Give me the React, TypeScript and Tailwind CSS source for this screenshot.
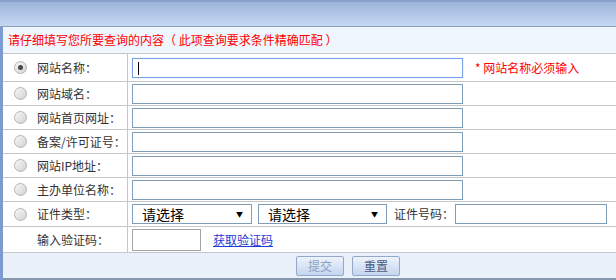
const font = { fontFamily: '"Noto Sans CJK SC", "Liberation Sans", sans-serif' };

function Radio({ checked }: { checked?: boolean }) {
  return (
    <span className="flex h-[13px] w-[13px] items-center justify-center rounded-full border border-[#b4b4b4] bg-gradient-to-br from-[#f8f8f8] to-[#d2d2d2]">
      {checked && <span className="h-[5px] w-[5px] rounded-full bg-[#4a4a4a]" />}
    </span>
  );
}

function Row({
  label,
  radio,
  checked,
  h,
  children,
}: {
  label: string;
  radio?: boolean;
  checked?: boolean;
  h: string;
  children: React.ReactNode;
}) {
  return (
    <div className={`flex ${h} border-b border-[#c6c6c6] bg-white`}>
      <div className="flex w-[125px] shrink-0 items-center border-r border-[#c6c6c6]">
        <div className="flex w-[34px] justify-center">{radio && <Radio checked={checked} />}</div>
        <span className="text-[12px] text-[#333]">{label}</span>
      </div>
      <div className="flex items-center pl-[4px]">{children}</div>
    </div>
  );
}

function Field({ w, focus }: { w: string; focus?: boolean }) {
  return (
    <div
      className={`relative h-[20px] ${w} border ${
        focus ? "border-[#7aa2e8] shadow-[0_0_1px_#9cbcf2]" : "border-[#7f9db9]"
      } bg-white`}
    >
      {focus && <span className="absolute left-[5px] top-[3px] h-[13px] w-px bg-black" />}
    </div>
  );
}

function Select({ w }: { w: string }) {
  return (
    <div className={`flex h-[20px] ${w} items-center justify-between border border-[#7f9db9] bg-white pl-[9px] pr-[8px]`}>
      <span className="text-[14px] leading-none text-black">请选择</span>
      <span className="text-[7px] leading-none text-black">▼</span>
    </div>
  );
}

export default function App() {
  return (
    <div className="h-[280px] w-[616px] overflow-hidden bg-white" style={font}>
      <div className="h-[27px] border-t-2 border-b border-t-[#8aa3cc] border-b-[#8c9fbc] bg-gradient-to-b from-[#9db5dc] to-[#c6d8f1]" />
      <div className="flex">
        <div className="w-[3px] shrink-0 bg-[#7e9bd0]" />
        <div className="flex-1">
          <div className="flex h-[27px] items-center border-b border-[#c6c6c6] bg-[#f0f6fd] pl-[5px] text-[12px] text-[#ff0000]">
            请仔细填写您所要查询的内容（ 此项查询要求条件精确匹配 ）
          </div>
          <Row label="网站名称：" radio checked h="h-[28px]">
            <Field w="w-[331px]" focus />
            <span className="ml-[12px] text-[12px] text-[#ff0000]">* 网站名称必须输入</span>
          </Row>
          <Row label="网站域名：" radio h="h-[24px]">
            <Field w="w-[331px]" />
          </Row>
          <Row label="网站首页网址：" radio h="h-[24px]">
            <Field w="w-[331px]" />
          </Row>
          <Row label="备案/许可证号：" radio h="h-[24px]">
            <Field w="w-[331px]" />
          </Row>
          <Row label="网站IP地址：" radio h="h-[24px]">
            <Field w="w-[331px]" />
          </Row>
          <Row label="主办单位名称：" radio h="h-[24px]">
            <Field w="w-[331px]" />
          </Row>
          <Row label="证件类型：" radio h="h-[25px]">
            <Select w="w-[120px]" />
            <div className="ml-[6px]">
              <Select w="w-[129px]" />
            </div>
            <span className="ml-[7px] text-[12px] text-[#333]">证件号码：</span>
            <div className="ml-[1px]">
              <Field w="w-[152px]" />
            </div>
          </Row>
          <Row label="输入验证码：" h="h-[26px]">
            <div className="h-[22px] w-[69px] border border-[#a5a5a5] bg-white" />
            <a className="ml-[12px] text-[12px] text-[#1d3bd8] underline">获取验证码</a>
          </Row>
          <div className="flex h-[27px] items-center gap-[8px] border-b-2 border-[#8796ad] bg-[#eaf1fa] pl-[293px]">
            <button className="h-[20px] w-[48px] rounded-[2px] border border-[#94a8c8] bg-gradient-to-b from-[#eef3fb] to-[#c4d5ee] text-[12px] text-[#8ea2c0]">
              提交
            </button>
            <button className="h-[20px] w-[48px] rounded-[2px] border border-[#94a8c8] bg-gradient-to-b from-[#eef3fb] to-[#c4d5ee] text-[12px] text-[#4a5c80]">
              重置
            </button>
          </div>
        </div>
      </div>
    </div>
  );
}
